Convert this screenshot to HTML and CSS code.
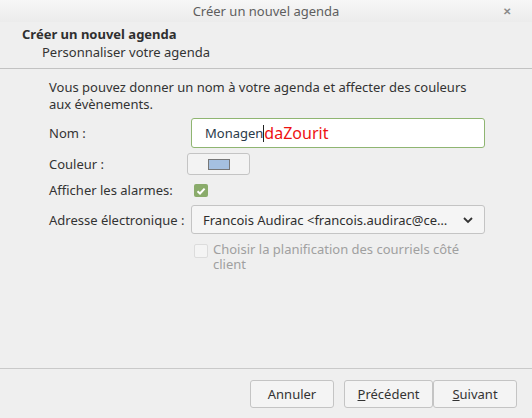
FILE: index.html
```html
<!DOCTYPE html>
<html lang="fr">
<head>
    <meta charset="UTF-8">
    <title>Créer un nouvel agenda</title>
    <link rel="stylesheet" href="styles.css">
</head>
<body>

<div class="titlebar">
    <span></span>
    <span class="title">Créer un nouvel agenda</span>
    <span class="close">&#x2715;</span>
</div>

<div class="header">
    <div class="header-title">Créer un nouvel agenda</div>
    <div class="header-sub">Personnaliser votre agenda</div>
</div>

<div class="content">
    <p class="intro">Vous pouvez donner un nom à votre agenda et affecter des couleurs aux évènements.</p>

    <div class="form">
        <label class="row-name">Nom :</label>
        <div class="name-input">
            <span class="typed">Monagen</span><span class="caret"></span><span class="hint">daZourit</span>
        </div>

        <label class="row-color">Couleur :</label>
        <div class="color-cell">
            <button class="color-btn"><span class="swatch"></span></button>
        </div>

        <label class="row-alarm">Afficher les alarmes:</label>
        <div class="alarm-cell">
            <span class="check on">
                <svg width="10" height="10" viewBox="0 0 10 10"><path d="M1.5 5.2 L4 7.5 L8.6 2.6" fill="none" stroke="#fff" stroke-width="2"/></svg>
            </span>
        </div>

        <label class="row-email">Adresse électronique :</label>
        <div class="select">
            <span>Francois Audirac &lt;francois.audirac@ce…</span>
            <svg width="12" height="8" viewBox="0 0 12 8"><path d="M2 2 L6 6 L10 2" fill="none" stroke="#333" stroke-width="1.8"/></svg>
        </div>

        <span></span>
        <div class="client-opt">
            <span class="check off"></span>
            <span class="client-text">Choisir la planification des courriels côté client</span>
        </div>
    </div>
</div>

<div class="footer">
    <button class="btn cancel">Annuler</button>
    <button class="btn prev"><u>P</u>récédent</button>
    <button class="btn next"><u>S</u>uivant</button>
</div>

</body>
</html>
```

FILE: styles.css
```css
body {
    margin: 0;
    width: 532px;
    height: 418px;
    background-color: #efefef;
    font-family: "Noto Sans", sans-serif;
    font-size: 13px;
    color: #3c3c3c;
    display: flex;
    flex-direction: column;
    overflow: hidden;
}
.titlebar {
    height: 22px;
    display: grid;
    grid-template-columns: 1fr auto 1fr;
    align-items: center;
    background: linear-gradient(#f7f7f7, #ececec);
    color: #5e5e5e;
}
.titlebar .close {
    justify-self: end;
    padding-right: 21px;
    font-size: 10px;
    font-weight: bold;
    color: #8a8a8a;
}
.header {
    padding: 3px 0 7px 22px;
    line-height: 18px;
    border-bottom: 1px solid #c2c2c2;
}
.header-title {
    font-weight: bold;
    color: #2f2f2f;
}
.header-sub {
    padding-left: 20px;
    color: #333;
}
.content {
    flex-grow: 1;
    padding: 10px 49px 0 49px;
}
.intro {
    margin: 0 0 5px 0;
    line-height: 17px;
    color: #333;
}
.form {
    display: grid;
    grid-template-columns: 138px 1fr;
    row-gap: 5px;
    align-items: center;
}
.form label {
    color: #333;
}
.name-input {
    height: 28px;
    margin-left: 4px;
    margin-right: -2px;
    border: 1px solid #8fb571;
    border-radius: 3px;
    background-color: #fff;
    display: flex;
    align-items: center;
    padding-left: 13px;
}
.typed {
    color: #2a3a4a;
}
.caret {
    width: 1px;
    height: 17px;
    background-color: #222;
}
.hint {
    color: #ee1111;
    font-size: 16px;
}
.color-btn {
    width: 63px;
    height: 22px;
    border: 1px solid #c4c4c4;
    border-radius: 3px;
    background-color: #f3f3f3;
    display: flex;
    align-items: center;
    justify-content: center;
    padding: 0;
}
.swatch {
    width: 20px;
    height: 9px;
    background-color: #a5c0e0;
    border: 1px solid #777;
}
.alarm-cell {
    padding: 4px 0 3px 7px;
    display: flex;
}
.check {
    width: 14px;
    height: 13px;
    border-radius: 2px;
    display: flex;
    align-items: center;
    justify-content: center;
}
.check.on {
    background-color: #8aab6b;
}
.check.off {
    width: 12px;
    height: 12px;
    border: 1px solid #dcdcdc;
    background-color: #f4f4f4;
    flex-shrink: 0;
    margin-top: 2px;
}
.select {
    height: 27px;
    margin-left: 4px;
    margin-right: -2px;
    border: 1px solid #c4c4c4;
    border-radius: 3px;
    background-color: #f5f5f5;
    display: flex;
    align-items: center;
    justify-content: space-between;
    padding: 0 10px 0 11px;
    color: #2e2e2e;
}
.client-opt {
    display: flex;
    gap: 5px;
    margin-left: 7px;
    margin-top: 3px;
}
.client-text {
    color: #a0a0a0;
    line-height: 15px;
    width: 250px;
}
.footer {
    height: 50px;
    border-top: 1px solid #c9c9c9;
    display: flex;
    justify-content: flex-end;
    align-items: flex-start;
    padding: 11px 15px 0 0;
    box-sizing: border-box;
}
.btn {
    height: 28px;
    font-family: "Noto Sans", sans-serif;
    font-size: 13px;
    color: #333;
    background-color: #f4f4f4;
    border: 1px solid #c4c4c4;
    border-radius: 3px;
    width: 84px;
    padding: 0;
}
.btn.cancel {
    margin-right: 10px;
}
.btn.prev {
    width: 89px;
}
```
